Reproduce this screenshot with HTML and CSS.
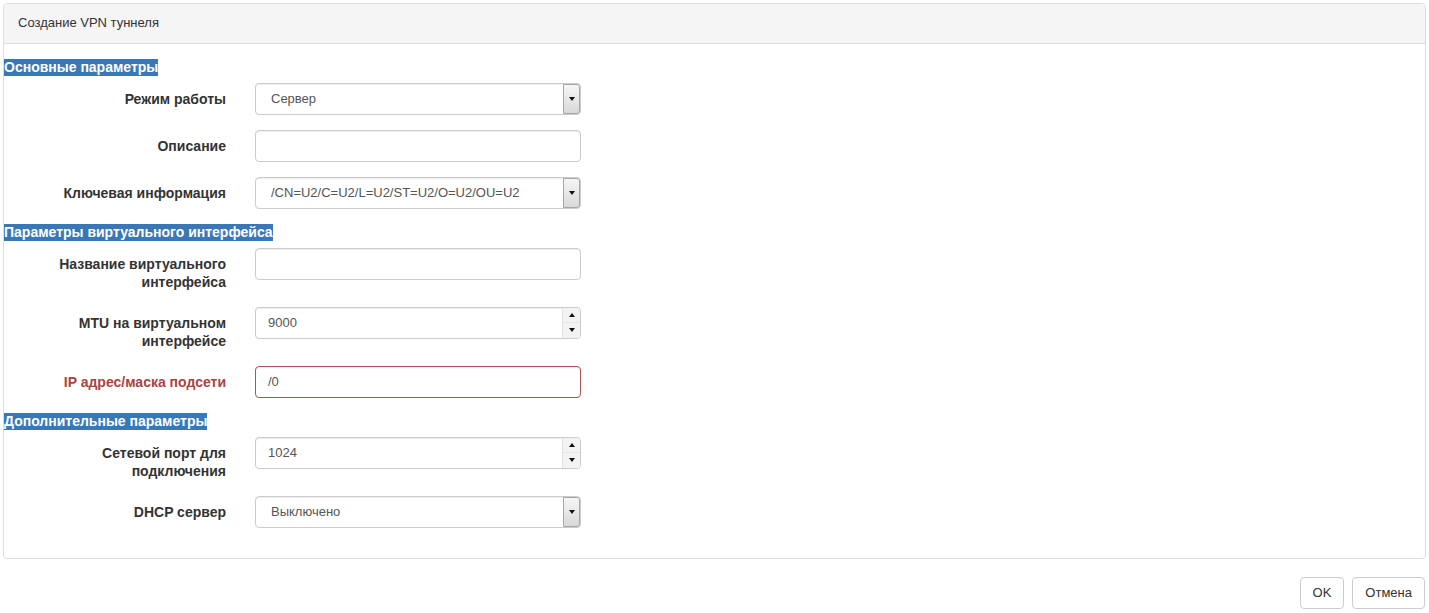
FILE: index.html
```html
<!DOCTYPE html>
<html lang="ru">
<head>
<meta charset="utf-8">
<title>Создание VPN туннеля</title>
<link rel="stylesheet" href="styles.css">
</head>
<body>
<div class="page">
  <div class="panel">
    <div class="panel-heading">Создание VPN туннеля</div>
    <div class="panel-body">
      <div class="section"><span class="section-title">Основные параметры</span></div>
      <div class="row">
        <label class="label">Режим работы</label>
        <div class="field select"><span class="value">Сервер</span><span class="drop"><span class="tri-down"></span></span></div>
      </div>
      <div class="row">
        <label class="label">Описание</label>
        <div class="field"><span class="value"></span></div>
      </div>
      <div class="row">
        <label class="label">Ключевая информация</label>
        <div class="field select"><span class="value">/CN=U2/C=U2/L=U2/ST=U2/O=U2/OU=U2</span><span class="drop"><span class="tri-down"></span></span></div>
      </div>

      <div class="section"><span class="section-title">Параметры виртуального интерфейса</span></div>
      <div class="row">
        <label class="label">Название виртуального<br>интерфейса</label>
        <div class="field"><span class="value"></span></div>
      </div>
      <div class="row">
        <label class="label">MTU на виртуальном<br>интерфейсе</label>
        <div class="field number"><span class="value">9000</span><span class="spin"><span class="spin-btn"><span class="tri-up"></span></span><span class="spin-btn"><span class="tri-down"></span></span></span></div>
      </div>
      <div class="row">
        <label class="label error">IP адрес/маска подсети</label>
        <div class="field has-error"><span class="value">/0</span></div>
      </div>

      <div class="section"><span class="section-title">Дополнительные параметры</span></div>
      <div class="row">
        <label class="label">Сетевой порт для<br>подключения</label>
        <div class="field number"><span class="value">1024</span><span class="spin"><span class="spin-btn"><span class="tri-up"></span></span><span class="spin-btn"><span class="tri-down"></span></span></span></div>
      </div>
      <div class="row">
        <label class="label">DHCP сервер</label>
        <div class="field select"><span class="value">Выключено</span><span class="drop"><span class="tri-down"></span></span></div>
      </div>
    </div>
  </div>
  <div class="actions">
    <button class="btn">OK</button>
    <button class="btn">Отмена</button>
  </div>
</div>
</body>
</html>
```

FILE: styles.css
```css
* { box-sizing: border-box; }
html, body {
  margin: 0;
  padding: 0;
  background: #fff;
}
body {
  font-family: "Liberation Sans", Arial, sans-serif;
  font-size: 13px;
  line-height: 1.43;
  color: #333;
}
.page {
  padding: 3px 3px 0 3px;
}
.panel {
  border: 1px solid #dddddd;
  border-radius: 4px;
  background: #fff;
}
.panel-heading {
  background: #f5f5f5;
  border-bottom: 1px solid #dddddd;
  border-radius: 3px 3px 0 0;
  padding: 10px 15px 10px 14px;
  color: #333;
}
.panel-body {
  padding: 15px 0 15px 0;
}
.section {
  display: flex;
  margin-bottom: 7px;
}
.section-title {
  background: #3a78b5;
  color: #fff;
  font-weight: bold;
  font-size: 14px;
  line-height: 17px;
}
.row {
  display: flex;
  align-items: flex-start;
  margin-bottom: 15px;
}
.label {
  width: 222px;
  flex: none;
  text-align: right;
  font-weight: bold;
  font-size: 14px;
  line-height: 18.5px;
  padding-top: 7px;
  margin-right: 29px;
  color: #333;
}
.label.error { color: #a94442; }
.field {
  width: 326px;
  height: 32px;
  flex: none;
  display: flex;
  align-items: stretch;
  border: 1px solid #cccccc;
  border-radius: 4px;
  box-shadow: inset 0 1px 1px rgba(0,0,0,0.075);
  color: #555;
  background: #fff;
}
.field .value {
  flex: 1;
  padding: 6px 12px;
  white-space: nowrap;
  overflow: hidden;
}
.field.select .value { padding-left: 15px; }
.field.has-error {
  border-color: #a75555;
  box-shadow: inset 0 1px 1px rgba(0,0,0,0.075);
}
.drop {
  width: 17px;
  flex: none;
  border: 1px solid #a6a6a6;
  border-radius: 0 3px 3px 0;
  background: linear-gradient(to bottom, #f6f6f6 0%, #e8e8e8 50%, #d8d8d8 100%);
  display: flex;
  align-items: center;
  justify-content: center;
}
.tri-down {
  width: 0;
  height: 0;
  border-left: 3.5px solid transparent;
  border-right: 3.5px solid transparent;
  border-top: 4px solid #111;
}
.tri-up {
  width: 0;
  height: 0;
  border-left: 3.5px solid transparent;
  border-right: 3.5px solid transparent;
  border-bottom: 4px solid #111;
}
.spin {
  width: 18px;
  flex: none;
  display: flex;
  flex-direction: column;
  border-left: 1px solid #e3e3e3;
  background: #f3f3f3;
  border-radius: 0 3px 3px 0;
}
.spin-btn {
  flex: 1;
  display: flex;
  align-items: center;
  justify-content: center;
}
.spin-btn + .spin-btn {
  border-top: 1px solid #e6e6e6;
}
.actions {
  display: flex;
  justify-content: flex-end;
  gap: 8px;
  margin-top: 18px;
  padding-right: 1px;
}
.btn {
  font-family: "Liberation Sans", Arial, sans-serif;
  font-size: 13px;
  line-height: 18px;
  color: #333;
  background: #fff;
  border: 1px solid #cccccc;
  border-radius: 4px;
  padding: 6px 12px;
  margin: 0;
}
```
